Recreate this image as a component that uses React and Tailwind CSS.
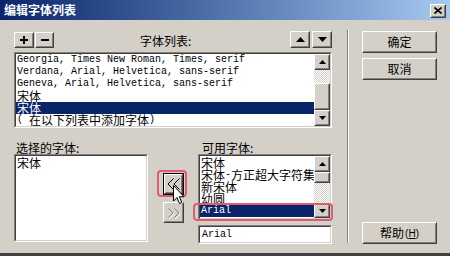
import React from "react";

const Raised = ({ className = "", inner = "", children }) => (
  <div className={`border border-t-white border-l-white border-r-[#404040] border-b-[#404040] bg-[#d4d0c8] ${className}`}>
    <div className={`w-full h-full border border-t-[#d4d0c8] border-l-[#d4d0c8] border-r-[#808080] border-b-[#808080] flex items-center justify-center ${inner}`}>
      {children}
    </div>
  </div>
);

const Sunken = ({ className = "", inner = "", children }) => (
  <div className={`border border-t-[#808080] border-l-[#808080] border-r-white border-b-white ${className}`}>
    <div className={`w-full h-full border border-t-[#404040] border-l-[#404040] border-r-[#d4d0c8] border-b-[#d4d0c8] bg-white ${inner}`}>
      {children}
    </div>
  </div>
);

const Tri = ({ up, w = 7, h = 4 }) => (
  <svg width={w} height={h} viewBox={`0 0 ${w} ${h}`}>
    {up ? (
      <polygon points={`${w / 2},0 ${w},${h} 0,${h}`} fill="#000" />
    ) : (
      <polygon points={`0,0 ${w},0 ${w / 2},${h}`} fill="#000" />
    )}
  </svg>
);

const M = ({ children }) => (
  <span className="font-['Liberation_Mono',monospace] text-[10px]">{children}</span>
);

const Row = ({ sel, children }) => (
  <div className={`h-[12px] leading-[12px] pl-[1px] whitespace-pre flex items-center ${sel ? "bg-[#0a246a] text-white" : "text-black"}`}>
    {children}
  </div>
);

const Track = ({ className = "" }) => (
  <div className={`bg-[repeating-conic-gradient(#d4d0c8_0%_25%,#ffffff_0%_50%)] bg-[length:2px_2px] ${className}`} />
);

export default function App() {
  return (
    <div className="w-[450px] h-[256px] bg-[#d4d0c8] flex flex-col overflow-hidden relative font-['Noto_Sans_CJK_SC',sans-serif] text-[12px] text-black border-b-[3px] border-[#404040]">
      {/* Title bar */}
      <div className="h-[20px] shrink-0 bg-gradient-to-r from-[#0a246a] to-[#a6caf0] flex items-center justify-between pl-[4px] pr-[4px]">
        <span className="text-white font-bold text-[12px] leading-[12px]">编辑字体列表</span>
        <Raised className="w-[16px] h-[14px] mt-[1px]">
          <svg width="8" height="7" viewBox="0 0 8 7">
            <path d="M0.5 0.5 L7.5 6.5 M7.5 0.5 L0.5 6.5" stroke="#000" strokeWidth="1.6" />
          </svg>
        </Raised>
      </div>

      {/* Body */}
      <div className="flex flex-1 min-h-0">
        {/* Left */}
        <div className="pl-[14px] pt-[11px] w-[332px] shrink-0 flex flex-col">
          {/* Top row */}
          <div className="h-[17px] flex items-center">
            <Raised className="w-[20px] h-[16px]">
              <svg width="8" height="8" viewBox="0 0 8 8">
                <path d="M0 4 H8 M4 0 V8" stroke="#000" strokeWidth="2" />
              </svg>
            </Raised>
            <Raised className="w-[19px] h-[16px] ml-[1px]">
              <svg width="8" height="2" viewBox="0 0 8 2">
                <path d="M0 1 H8" stroke="#000" strokeWidth="2" />
              </svg>
            </Raised>
            <span className="ml-[86px] leading-[12px] mt-[3px]">字体列表:</span>
            <Raised className="w-[20px] h-[17px] ml-auto">
              <Tri up w={9} h={5} />
            </Raised>
            <Raised className="w-[20px] h-[17px] ml-[2px]">
              <Tri w={9} h={5} />
            </Raised>
          </div>

          {/* Main list */}
          <Sunken className="mt-[4px] h-[76px] w-full" inner="flex">
            <div className="flex-1 overflow-hidden">
              <Row><M>Georgia, Times New Roman, Times, serif</M></Row>
              <Row><M>Verdana, Arial, Helvetica, sans-serif</M></Row>
              <Row><M>Geneva, Arial, Helvetica, sans-serif</M></Row>
              <Row>宋体</Row>
              <Row sel>宋体</Row>
              <Row><M>{"(\u00a0"}</M>在以下列表中添加字体<M>)</M></Row>
            </div>
            <div className="w-[16px] flex flex-col">
              <Raised className="w-[16px] h-[16px] shrink-0"><Tri up /></Raised>
              <Track className="flex-1" />
              <Raised className="w-[16px] h-[27px] shrink-0" />
              <Raised className="w-[16px] h-[16px] shrink-0"><Tri /></Raised>
            </div>
          </Sunken>

          {/* Bottom area */}
          <div className="mt-[14px] flex">
            {/* Selected fonts */}
            <div className="w-[134px] flex flex-col">
              <div className="h-[12px] leading-[12px] pl-[2px]">选择的字体:</div>
              <Sunken className="h-[88px] w-full" inner="pt-[1px]">
                <Row>宋体</Row>
              </Sunken>
            </div>

            {/* Middle buttons */}
            <div className="ml-[15px] w-[20px] flex flex-col">
              <div className="relative mt-[31px]">
                <div className="absolute -left-[6px] -top-[3px] w-[30px] h-[27px] border-2 border-[#e25a72] rounded-[4px]" />
                <div className="w-[21px] h-[22px] border border-black">
                  <Raised className="w-full h-full">
                    <svg width="13" height="12" viewBox="0 0 13 12">
                      <path d="M6.5 0.5 L1 6 L6.5 11.5 M12.5 0.5 L7 6 L12.5 11.5" stroke="#000" strokeWidth="1" fill="none" />
                    </svg>
                  </Raised>
                </div>
              </div>
              <Raised className="w-[21px] h-[21px] mt-[7px]">
                <svg width="13" height="12" viewBox="0 0 13 12">
                  <path d="M1.5 1.5 L6 6 L1.5 10.5 M7.5 1.5 L12 6 L7.5 10.5" stroke="#ffffff" strokeWidth="1" fill="none" transform="translate(1 1)" />
                  <path d="M1.5 1.5 L6 6 L1.5 10.5 M7.5 1.5 L12 6 L7.5 10.5" stroke="#808080" strokeWidth="1" fill="none" />
                </svg>
              </Raised>
            </div>

            {/* Available fonts */}
            <div className="ml-[15px] w-[134px] flex flex-col">
              <div className="h-[12px] leading-[12px] pl-[4px]">可用字体:</div>
              <div className="relative">
                <Sunken className="h-[66px] w-full" inner="flex">
                  <div className="flex-1 pt-[1px] overflow-hidden">
                    <Row>宋体</Row>
                    <Row>宋体<M>-</M>方正超大字符集</Row>
                    <Row>新宋体</Row>
                    <Row>幼圆</Row>
                    <Row sel><M>Arial</M></Row>
                  </div>
                  <div className="w-[16px] flex flex-col">
                    <Raised className="w-[16px] h-[16px] shrink-0"><Tri up /></Raised>
                    <Raised className="w-[16px] h-[11px] shrink-0" />
                    <Track className="flex-1" />
                    <Raised className="w-[16px] h-[14px] shrink-0"><Tri /></Raised>
                  </div>
                </Sunken>
                <div className="absolute -left-[5px] -right-[1px] top-[49px] h-[18px] border-2 border-[#e25a72] rounded-[4px]" />
              </div>
              <Sunken className="mt-[5px] h-[19px] w-full" inner="pl-[2px] flex items-center">
                <M>Arial</M>
              </Sunken>
            </div>
          </div>
        </div>

        {/* Separator */}
        <div className="ml-[15px] mt-[10px] h-[213px] w-[2px] border-l border-l-[#808080] border-r border-r-white" />

        {/* Right buttons */}
        <div className="ml-[13px] pt-[11px] pb-[9px] w-[75px] flex flex-col">
          <Raised className="h-[22px] w-full">确定</Raised>
          <Raised className="h-[22px] w-full mt-[5px]">取消</Raised>
          <Raised className="h-[22px] w-full mt-auto">
            <span>帮助</span>
            <span className="font-['Liberation_Sans',sans-serif] text-[10px] ml-[1px]">(<span className="underline">H</span>)</span>
          </Raised>
        </div>
      </div>

      {/* Cursor */}
      <svg className="absolute left-[173px] top-[185px]" width="12" height="20" viewBox="0 0 12 20">
        <path d="M0.5 0.5 V16 L4 12.5 L6.5 18.5 L8.8 17.5 L6.3 11.7 L11 11.7 Z" fill="#fff" stroke="#000" strokeWidth="1" />
      </svg>
    </div>
  );
}
